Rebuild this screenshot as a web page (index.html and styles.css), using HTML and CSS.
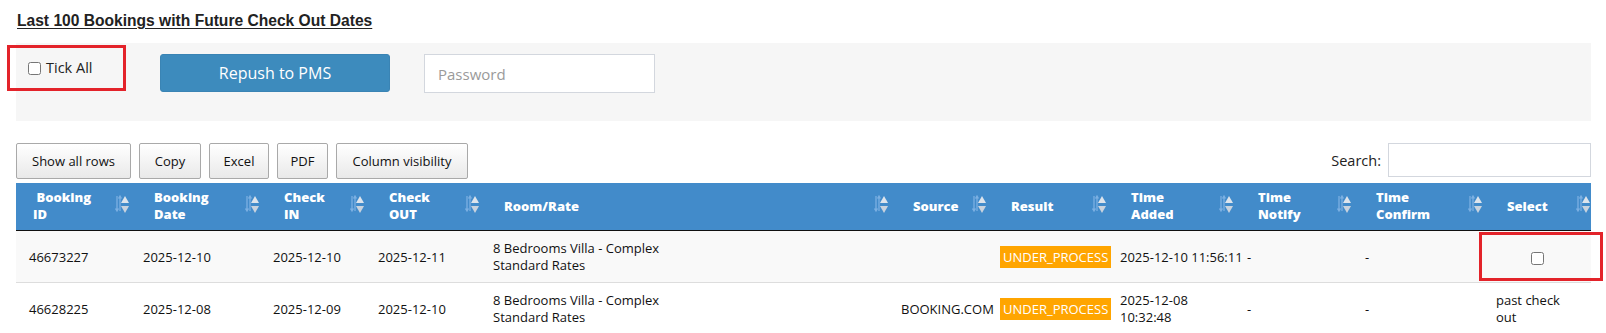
FILE: index.html
```html
<!DOCTYPE html>
<html>
<head>
<meta charset="utf-8">
<link rel="stylesheet" href="styles.css">
</head>
<body>
<div class="page">
  <h3 class="title">Last 100 Bookings with Future Check Out Dates</h3>
  <div class="panel">
    <label class="tick"><input type="checkbox" class="cb"> Tick All</label>
    <button class="repush">Repush to PMS</button>
    <input class="pwd" type="password" placeholder="Password">
    <span class="mark mark-tick"></span>
  </div>
  <div class="toolbar">
    <div class="btns">
      <button class="dt-btn">Show all rows</button>
      <button class="dt-btn">Copy</button>
      <button class="dt-btn">Excel</button>
      <button class="dt-btn">PDF</button>
      <button class="dt-btn">Column visibility</button>
    </div>
    <label class="search">Search: <input class="search-in" type="text"></label>
  </div>
  <table class="grid">
    <colgroup>
      <col class="w1"><col class="w2"><col class="w3"><col class="w4"><col class="w5"><col class="w6"><col class="w7"><col class="w8"><col class="w9"><col class="w10"><col class="w11">
    </colgroup>
    <thead>
      <tr>
        <th class="first"><div class="th"><span>&nbsp;Booking<br>ID</span><svg class="sort" viewBox="0 0 14 22"><path d="M2 3v15M0.5 15.5L2 18l1.5-2.5M5 18V3M3.5 5.5L5 3l1.5 2.5" stroke="#7cb0e2" stroke-width="1.3" fill="none"/><polygon points="6,10 10,3 14,10" fill="#dde4ec"/><polygon points="6,13 14,13 10,20" fill="#c9d3de"/></svg></div></th>
        <th><div class="th"><span>Booking<br>Date</span><svg class="sort" viewBox="0 0 14 22"><path d="M2 3v15M0.5 15.5L2 18l1.5-2.5M5 18V3M3.5 5.5L5 3l1.5 2.5" stroke="#7cb0e2" stroke-width="1.3" fill="none"/><polygon points="6,10 10,3 14,10" fill="#dde4ec"/><polygon points="6,13 14,13 10,20" fill="#c9d3de"/></svg></div></th>
        <th><div class="th"><span>Check<br>IN</span><svg class="sort" viewBox="0 0 14 22"><path d="M2 3v15M0.5 15.5L2 18l1.5-2.5M5 18V3M3.5 5.5L5 3l1.5 2.5" stroke="#7cb0e2" stroke-width="1.3" fill="none"/><polygon points="6,10 10,3 14,10" fill="#dde4ec"/><polygon points="6,13 14,13 10,20" fill="#c9d3de"/></svg></div></th>
        <th><div class="th"><span>Check<br>OUT</span><svg class="sort" viewBox="0 0 14 22"><path d="M2 3v15M0.5 15.5L2 18l1.5-2.5M5 18V3M3.5 5.5L5 3l1.5 2.5" stroke="#7cb0e2" stroke-width="1.3" fill="none"/><polygon points="6,10 10,3 14,10" fill="#dde4ec"/><polygon points="6,13 14,13 10,20" fill="#c9d3de"/></svg></div></th>
        <th><div class="th"><span>Room/Rate</span><svg class="sort" viewBox="0 0 14 22"><path d="M2 3v15M0.5 15.5L2 18l1.5-2.5M5 18V3M3.5 5.5L5 3l1.5 2.5" stroke="#7cb0e2" stroke-width="1.3" fill="none"/><polygon points="6,10 10,3 14,10" fill="#dde4ec"/><polygon points="6,13 14,13 10,20" fill="#c9d3de"/></svg></div></th>
        <th><div class="th"><span>Source</span><svg class="sort" viewBox="0 0 14 22"><path d="M2 3v15M0.5 15.5L2 18l1.5-2.5M5 18V3M3.5 5.5L5 3l1.5 2.5" stroke="#7cb0e2" stroke-width="1.3" fill="none"/><polygon points="6,10 10,3 14,10" fill="#dde4ec"/><polygon points="6,13 14,13 10,20" fill="#c9d3de"/></svg></div></th>
        <th><div class="th"><span>Result</span><svg class="sort" viewBox="0 0 14 22"><path d="M2 3v15M0.5 15.5L2 18l1.5-2.5M5 18V3M3.5 5.5L5 3l1.5 2.5" stroke="#7cb0e2" stroke-width="1.3" fill="none"/><polygon points="6,10 10,3 14,10" fill="#dde4ec"/><polygon points="6,13 14,13 10,20" fill="#c9d3de"/></svg></div></th>
        <th><div class="th"><span>Time<br>Added</span><svg class="sort" viewBox="0 0 14 22"><path d="M2 3v15M0.5 15.5L2 18l1.5-2.5M5 18V3M3.5 5.5L5 3l1.5 2.5" stroke="#7cb0e2" stroke-width="1.3" fill="none"/><polygon points="6,10 10,3 14,10" fill="#dde4ec"/><polygon points="6,13 14,13 10,20" fill="#c9d3de"/></svg></div></th>
        <th><div class="th"><span>Time<br>Notify</span><svg class="sort" viewBox="0 0 14 22"><path d="M2 3v15M0.5 15.5L2 18l1.5-2.5M5 18V3M3.5 5.5L5 3l1.5 2.5" stroke="#7cb0e2" stroke-width="1.3" fill="none"/><polygon points="6,10 10,3 14,10" fill="#dde4ec"/><polygon points="6,13 14,13 10,20" fill="#c9d3de"/></svg></div></th>
        <th><div class="th"><span>Time<br>Confirm</span><svg class="sort" viewBox="0 0 14 22"><path d="M2 3v15M0.5 15.5L2 18l1.5-2.5M5 18V3M3.5 5.5L5 3l1.5 2.5" stroke="#7cb0e2" stroke-width="1.3" fill="none"/><polygon points="6,10 10,3 14,10" fill="#dde4ec"/><polygon points="6,13 14,13 10,20" fill="#c9d3de"/></svg></div></th>
        <th><div class="th"><span>Select</span><svg class="sort" viewBox="0 0 14 22"><path d="M2 3v15M0.5 15.5L2 18l1.5-2.5M5 18V3M3.5 5.5L5 3l1.5 2.5" stroke="#7cb0e2" stroke-width="1.3" fill="none"/><polygon points="6,10 10,3 14,10" fill="#dde4ec"/><polygon points="6,13 14,13 10,20" fill="#c9d3de"/></svg></div></th>
      </tr>
    </thead>
    <tbody>
      <tr class="odd">
        <td>46673227</td>
        <td>2025-12-10</td>
        <td>2025-12-10</td>
        <td>2025-12-11</td>
        <td>8 Bedrooms Villa - Complex<br>Standard Rates</td>
        <td></td>
        <td><span class="badge">UNDER_PROCESS</span></td>
        <td class="nowrap">2025-12-10 11:56:11</td>
        <td>-</td>
        <td>-</td>
        <td class="sel"><input type="checkbox" class="cb"><span class="mark mark-sel"></span></td>
      </tr>
      <tr>
        <td>46628225</td>
        <td>2025-12-08</td>
        <td>2025-12-09</td>
        <td>2025-12-10</td>
        <td>8 Bedrooms Villa - Complex<br>Standard Rates</td>
        <td class="src">BOOKING.COM</td>
        <td><span class="badge">UNDER_PROCESS</span></td>
        <td>2025-12-08<br>10:32:48</td>
        <td>-</td>
        <td>-</td>
        <td>past check<br>out</td>
      </tr>
    </tbody>
  </table>
</div>
</body>
</html>
```

FILE: styles.css
```css
* { box-sizing: border-box; }
html, body { margin: 0; padding: 0; background: #fff; }
body { font-family: "Open Sans", "Liberation Sans", sans-serif; color: #111; font-size: 13px; }

.page { padding: 12px 15px 0 16px; width: 1606px; }

.title {
  margin: 0 0 0 1px;
  font-family: "Liberation Sans", Arial, sans-serif;
  font-weight: bold;
  font-size: 15.6px;
  line-height: 18px;
  height: 18px;
  color: #222;
  text-decoration: underline;
  text-underline-offset: 2px;
}

.panel {
  position: relative;
  margin-top: 13px;
  background: #f6f6f6;
  height: 78px;
  width: 1575px;
  padding: 11px 12px 0 12px;
  display: flex;
  align-items: flex-start;
}
.tick {
  width: 132px;
  display: flex;
  align-items: center;
  gap: 5px;
  margin-top: 5px;
  font-size: 14.5px;
  color: #222;
  line-height: 18px;
}
.cb {
  margin: 0;
  width: 13px;
  height: 13px;
}
.repush {
  width: 230px;
  height: 38px;
  background: #3d8bbd;
  border: 1px solid #3a84b4;
  border-radius: 3px;
  color: #fff;
  font-family: "Open Sans", sans-serif;
  font-size: 16px;
  font-weight: 500;
  padding: 0;
}
.pwd {
  margin-left: 34px;
  width: 231px;
  height: 39px;
  border: 1px solid #d3d7de;
  background: #fff;
  padding: 0 13px;
  font-family: "Open Sans", sans-serif;
  font-size: 15px;
}
.pwd::placeholder { color: #9a9a9a; }

.mark {
  position: absolute;
  border: 3px solid #e3232a;
  pointer-events: none;
}
.mark-tick { left: -9px; top: 2px; width: 119px; height: 46px; }

.toolbar {
  margin-top: 22px;
  width: 1575px;
  display: flex;
  justify-content: space-between;
  align-items: flex-start;
  margin-bottom: 4px;
}
.btns { display: flex; gap: 8px; }
.dt-btn {
  height: 36px;
  padding: 0;
  border: 1px solid #a9a9a9;
  border-radius: 2px;
  background: linear-gradient(#ffffff, #e9e9e9);
  font-family: "Open Sans", sans-serif;
  font-size: 13px;
  color: #111;
}
.btns .dt-btn:nth-child(1) { width: 115px; }
.btns .dt-btn:nth-child(2) { width: 62px; }
.btns .dt-btn:nth-child(3) { width: 60px; }
.btns .dt-btn:nth-child(4) { width: 51px; }
.btns .dt-btn:nth-child(5) { width: 132px; }

.search {
  display: flex;
  align-items: center;
  gap: 7px;
  font-size: 14.5px;
  color: #222;
}
.search-in {
  width: 203px;
  height: 34px;
  border: 1px solid #d3d7de;
  background: #fff;
}

.grid {
  width: 1575px;
  border-collapse: collapse;
  table-layout: fixed;
}
.w1 { width: 114px; } .w2 { width: 130px; } .w3 { width: 105px; } .w4 { width: 115px; }
.w5 { width: 409px; } .w6 { width: 98px; } .w7 { width: 120px; } .w8 { width: 127px; }
.w9 { width: 118px; } .w10 { width: 131px; } .w11 { width: 108px; }

.grid th {
  background: #428bca;
  color: #fff;
  font-weight: 800;
  font-size: 13px;
  line-height: 17px;
  text-align: left;
  padding: 6px 1px 7px 24px;
  height: 47px;
  border-bottom: 1px solid #111;
}
.grid th.first { padding-left: 17px; }
.th {
  display: flex;
  justify-content: space-between;
  align-items: center;
}
.sort { width: 14px; height: 22px; flex: none; margin-top: -4px; }

.grid td {
  padding: 9px 0 8px 13px;
  line-height: 17px;
  font-size: 13px;
  vertical-align: middle;
  border-bottom: 1px solid #ddd;
  height: 52px;
}
.grid tr.odd td { background: #f9f9f9; }
.nowrap { white-space: nowrap; }
.src { padding-left: 12px !important; white-space: nowrap; }
.badge {
  display: inline-block;
  background: #ffa500;
  color: #fff;
  padding: 2px 3px;
  line-height: 18px;
  font-size: 13px;
}
.sel { position: relative; text-align: center; padding-left: 0 !important; }
.sel .cb { vertical-align: middle; }
.mark-sel { left: -4px; top: 1px; width: 124px; height: 49px; }
```
